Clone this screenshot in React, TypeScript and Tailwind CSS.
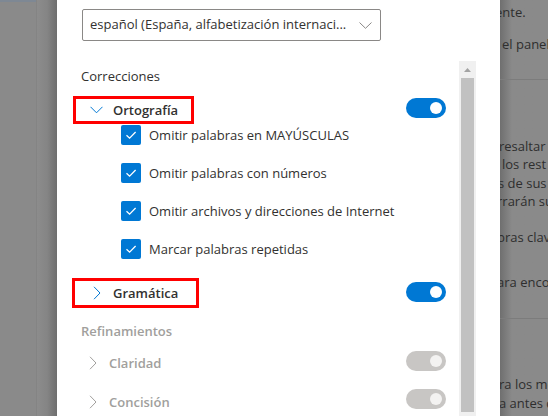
import React from "react";

const FONT = { fontFamily: '"Open Sans", "Noto Sans", sans-serif' };

function Toggle({ on }: { on: boolean }) {
  return (
    <div
      className={
        "w-[40px] h-[20px] rounded-full flex items-center justify-end pr-[4px] " +
        (on ? "bg-[#0078d4]" : "bg-[#c8c6c4]")
      }
    >
      <div className={"w-[12px] h-[12px] rounded-full " + (on ? "bg-white" : "bg-[#f3f2f1]")} />
    </div>
  );
}

function Check({ label }: { label: string }) {
  return (
    <div className="flex items-center h-[20px]">
      <div className="w-[20px] h-[20px] rounded-[2px] bg-[#0078d4] flex items-center justify-center">
        <svg width="12" height="10" viewBox="0 0 12 10">
          <path d="M1.5 5.2 L4.6 8.2 L10.6 2" fill="none" stroke="white" strokeWidth="1.3" />
        </svg>
      </div>
      <span className="ml-[8px] text-[13px] text-[#323130] leading-[20px]">{label}</span>
    </div>
  );
}

function ChevronRight({ color }: { color: string }) {
  return (
    <svg width="8" height="14" viewBox="0 0 8 14" className="ml-[20px] mr-[12px]">
      <path d="M1 0.8 L7 7 L1 13.2" fill="none" stroke={color} strokeWidth="1" />
    </svg>
  );
}

export default function App() {
  return (
    <div className="w-[548px] h-[416px] flex overflow-hidden bg-[#8c8c8c]" style={FONT}>
      {/* left background */}
      <div className="w-[57px] h-full flex shrink-0">
        <div className="w-[37px] h-full bg-[#8a8a8a] border-r border-[#848484] flex flex-col">
          <div className="h-[2px] bg-[#7e8894]" />
        </div>
        <div className="flex-1 h-full bg-gradient-to-r from-[#8c8c8c] via-[#858585] to-[#6e6e6e]" />
      </div>

      {/* dialog */}
      <div className="w-[443px] h-full bg-white flex flex-col shrink-0">
        <div className="pl-[25px] pt-[9px]">
          <div className="w-[299px] h-[32px] border border-[#8a8886] rounded-[2px] flex items-center justify-between pl-[7px] pr-[8px]">
            <span className="text-[13px] text-[#323130] whitespace-nowrap">
              español (España, alfabetización internaci...
            </span>
            <svg width="13" height="7" viewBox="0 0 13 7">
              <path d="M0.5 0.5 L6.5 6.3 L12.5 0.5" fill="none" stroke="#8a8886" strokeWidth="1" />
            </svg>
          </div>
        </div>

        <div className="flex flex-1 mt-[20px] min-h-0">
          <div className="flex-1 pl-[24px] pr-[13px] flex flex-col">
            <div className="pt-[5px] h-[25px] text-[13px] leading-[20px] text-[#323130]">Correcciones</div>

            {/* Ortografía */}
            <div className="mt-[10px] flex items-center justify-between h-[28px]">
              <div className="-ml-[8px] w-[121px] h-[28px] border-[3px] border-[#ff0000] flex items-center">
                <svg width="13" height="8" viewBox="0 0 13 8" className="ml-[14px] mr-[10px]">
                  <path d="M0.5 0.8 L6.5 6.8 L12.5 0.8" fill="none" stroke="#0078d4" strokeWidth="1" />
                </svg>
                <span className="text-[13px] font-semibold text-[#323130] leading-[20px]">Ortografía</span>
              </div>
              <div className="-mt-[5px]">
                <Toggle on />
              </div>
            </div>

            <div className="pl-[40px] pt-[1px] flex flex-col gap-[18px]">
              <Check label="Omitir palabras en MAYÚSCULAS" />
              <Check label="Omitir palabras con números" />
              <Check label="Omitir archivos y direcciones de Internet" />
              <Check label="Marcar palabras repetidas" />
            </div>

            {/* Gramática */}
            <div className="mt-[19px] flex items-center justify-between h-[30px]">
              <div className="-ml-[9px] w-[127px] h-[30px] border-[3px] border-[#ff0000] flex items-center">
                <svg width="8" height="14" viewBox="0 0 8 14" className="ml-[18px] mr-[12px]">
                  <path d="M1 0.8 L7 7 L1 13.2" fill="none" stroke="#0078d4" strokeWidth="1" />
                </svg>
                <span className="text-[13px] font-semibold text-[#323130] leading-[20px]">Gramática</span>
              </div>
              <div className="-mt-[2px]">
                <Toggle on />
              </div>
            </div>

            <div className="mt-[13px] h-[20px] text-[13px] leading-[20px] font-semibold text-[#a19f9d]">Refinamientos</div>

            <div className="mt-[8px] flex items-center justify-between h-[28px]">
              <div className="flex items-center -ml-[12px]">
                <ChevronRight color="#a19f9d" />
                <span className="text-[13px] font-semibold text-[#a19f9d] leading-[20px]">Claridad</span>
              </div>
              <div className="-mt-[4px]">
                <Toggle on={false} />
              </div>
            </div>

            <div className="mt-[11px] flex items-center justify-between h-[28px]">
              <div className="flex items-center -ml-[12px]">
                <ChevronRight color="#a19f9d" />
                <span className="text-[13px] font-semibold text-[#a19f9d] leading-[20px]">Concisión</span>
              </div>
              <div className="-mt-[6px]">
                <Toggle on={false} />
              </div>
            </div>
          </div>

          {/* scrollbar */}
          <div className="w-[17px] h-full bg-[#f0f0f0] flex flex-col items-center">
            <div className="h-[17px] flex items-center justify-center">
              <svg width="7" height="4" viewBox="0 0 7 4">
                <path d="M0 4 L3.5 0 L7 4 Z" fill="#a3a3a3" />
              </svg>
            </div>
            <div className="w-[13px] flex-1 bg-[#c1c1c1] mb-[4px]" />
          </div>
          <div className="w-[24px]" />
        </div>
      </div>

      {/* right background */}
      <div className="flex-1 h-full relative overflow-hidden bg-gradient-to-r from-[#6f6f6f] via-[#8a8a8a] to-[#8a8a8a] via-[25%] text-[13px] text-[#2e2e2e] leading-[18px] whitespace-nowrap">
        <div className="pt-[3px] -ml-[5px]">ente.</div>
        <div className="mt-[14px] ml-[2px]">el panel</div>
        <div className="mt-[26px] h-px bg-[#7c7c7c]" />
        <div className="mt-[57px] -ml-[1px]">resaltar p</div>
        <div className="ml-[2px] leading-[19px]">los rest</div>
        <div className="-ml-[2px]">s de sus</div>
        <div className="-ml-[3px]">rrarán su</div>
        <div className="mt-[18px] -ml-[3px]">bras clav</div>
        <div className="mt-[27px] -ml-[3px]">ara enco</div>
        <div className="mt-[27px] h-px bg-[#7c7c7c]" />
        <div className="mt-[56px] -ml-[1px]">ra los me</div>
        <div className="-ml-[1px] leading-[20px]">a antes d</div>
      </div>
    </div>
  );
}
